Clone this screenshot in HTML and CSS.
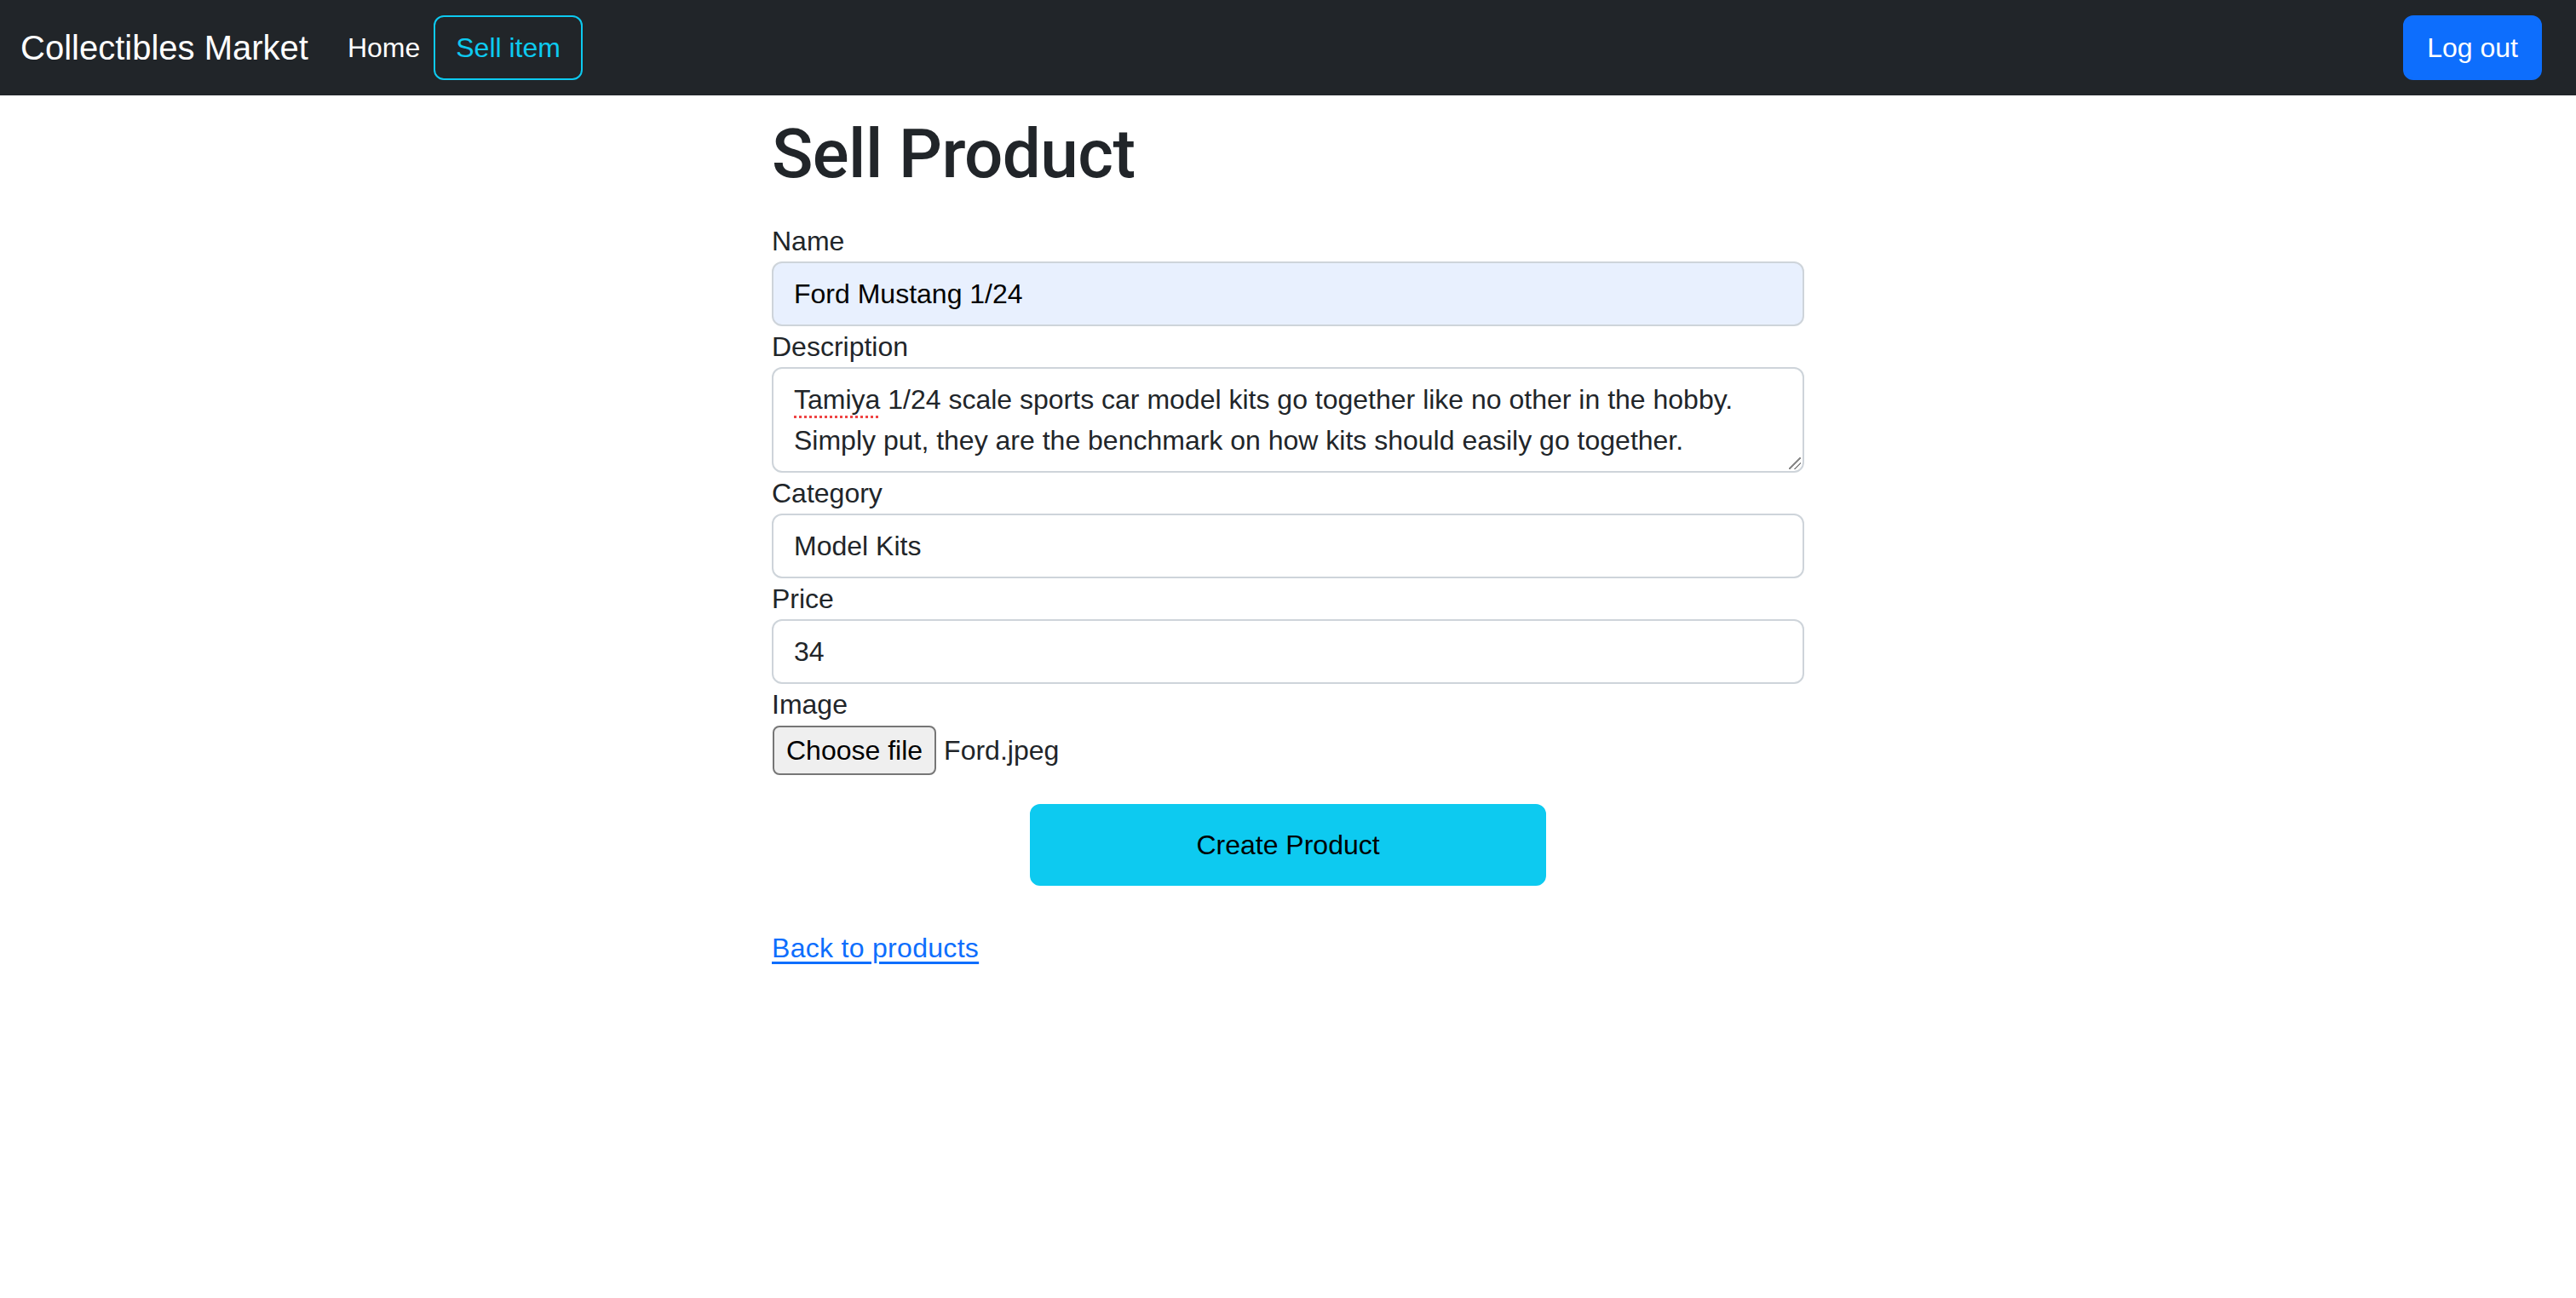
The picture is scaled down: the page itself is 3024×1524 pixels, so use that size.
FILE: index.html
```html
<!DOCTYPE html>
<html lang="en">
<head>
<meta charset="utf-8">
<title>Sell Product - Collectibles Market</title>
<link rel="stylesheet" href="styles.css">
</head>
<body>
<nav class="navbar">
  <div class="nav-left">
    <a class="brand" href="#">Collectibles Market</a>
    <a class="nav-link" href="#">Home</a>
    <a class="btn btn-outline-info" href="#">Sell item</a>
  </div>
  <a class="btn btn-primary" href="#">Log out</a>
</nav>
<main class="container">
  <h1 class="title">Sell Product</h1>
  <form class="product-form">
    <label class="form-label" for="name">Name</label>
    <input class="form-control autofilled" id="name" type="text" value="Ford Mustang 1/24">
    <label class="form-label">Description</label>
    <div class="form-control textarea"><span class="misspelled">Tamiya</span> 1/24 scale sports car model kits go together like no other in the hobby.<br>Simply put, they are the benchmark on how kits should easily go together.<span class="resize-handle"></span></div>
    <label class="form-label" for="category">Category</label>
    <input class="form-control" id="category" type="text" value="Model Kits">
    <label class="form-label" for="price">Price</label>
    <input class="form-control" id="price" type="text" value="34">
    <label class="form-label">Image</label>
    <div class="file-input">
      <span class="file-button">Choose file</span>
      <span class="file-name">Ford.jpeg</span>
    </div>
    <div class="submit-row">
      <button class="btn-submit" type="button">Create Product</button>
    </div>
  </form>
  <p class="back"><a href="#">Back to products</a></p>
</main>
</body>
</html>
```

FILE: styles.css
```css
* { box-sizing: border-box; }

body {
  margin: 0;
  font-family: "Liberation Sans", Arial, sans-serif;
  font-size: 32px;
  line-height: 48px;
  color: #212529;
  background: #fff;
}

.navbar {
  height: 112px;
  background: #212529;
  display: flex;
  align-items: center;
  justify-content: space-between;
  padding: 0 40px 0 24px;
}

.nav-left {
  display: flex;
  align-items: center;
}

.brand {
  font-size: 40px;
  line-height: 60px;
  padding: 10px 0;
  margin-right: 30px;
  color: #fff;
  text-decoration: none;
}

.nav-link {
  color: #fff;
  text-decoration: none;
  padding: 0 16px;
}

.btn {
  display: inline-block;
  height: 76px;
  padding: 12px 24px;
  border: 2px solid transparent;
  border-radius: 12px;
  text-decoration: none;
  font-size: 32px;
  line-height: 48px;
}

.btn-outline-info {
  color: #0dcaf0;
  border-color: #0dcaf0;
}

.btn-primary {
  color: #fff;
  background: #0d6efd;
  border-color: #0d6efd;
  padding: 12px 26px;
}

.container {
  width: 1212px;
  margin: 0 auto;
}

.title {
  font-family: Roboto, "Liberation Sans", sans-serif;
  font-size: 80px;
  line-height: 96px;
  font-weight: 500;
  letter-spacing: -0.6px;
  margin: 21px 0 30px;
}

.product-form {
  display: flex;
  flex-direction: column;
}

.form-label {
  display: block;
}

.form-control {
  display: block;
  width: 100%;
  height: 76px;
  padding: 12px 24px;
  font-family: inherit;
  font-size: 32px;
  line-height: 48px;
  color: #212529;
  background: #fff;
  border: 2px solid #ced4da;
  border-radius: 12px;
  outline: none;
}

.autofilled {
  background: #e8f0fe;
  color: #000;
}

.textarea {
  position: relative;
  height: 124px;
  white-space: nowrap;
}

.misspelled {
  text-decoration: underline dotted #ef4444;
  text-decoration-thickness: 3px;
  text-underline-offset: 8px;
}

.resize-handle {
  position: absolute;
  right: 2px;
  bottom: 2px;
  width: 14px;
  height: 14px;
  background:
    linear-gradient(135deg, transparent 46%, #8a8a8a 46%, #8a8a8a 54%, transparent 54%, transparent 70%, #8a8a8a 70%, #8a8a8a 78%, transparent 78%);
}

.file-input {
  display: flex;
  align-items: center;
  height: 60px;
}

.file-button {
  display: inline-block;
  height: 58px;
  line-height: 54px;
  padding: 0 14px;
  margin-left: 1px;
  border: 2px solid #767676;
  border-radius: 8px;
  background: #efefef;
  color: #000;
}

.file-name {
  margin-left: 9px;
  color: #212529;
}

.submit-row {
  display: flex;
  justify-content: center;
  margin-top: 33px;
}

.btn-submit {
  width: 606px;
  height: 96px;
  font-family: inherit;
  font-size: 32px;
  color: #000;
  background: #0dcaf0;
  border: 2px solid #0dcaf0;
  border-radius: 12px;
}

.back {
  margin: 49px 0 0;
}

.back a {
  color: #0d6efd;
  text-decoration: underline;
  text-underline-offset: 5px;
  letter-spacing: 0.3px;
}
```
